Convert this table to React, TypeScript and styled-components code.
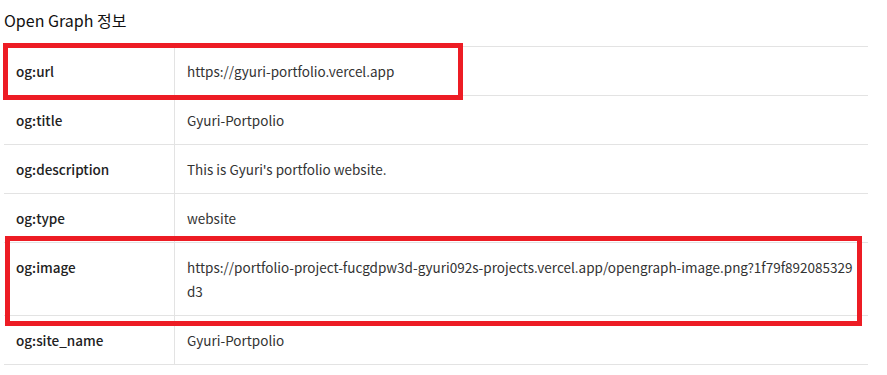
import styled, { createGlobalStyle } from "styled-components";

const GlobalStyle = createGlobalStyle`
  body {
    margin: 0;
    background: #fff;
    font-family: "Noto Sans CJK KR", "Noto Sans", sans-serif;
    color: #222;
  }
`;

const Page = styled.div`
  padding: 8px 19px 0 4px;
`;

const Heading = styled.h3`
  margin: 0 0 14px;
  font-size: 16px;
  font-weight: 400;
  line-height: 24px;
  color: #111;
`;

const TableWrap = styled.div`
  position: relative;
`;

const Table = styled.table`
  width: 100%;
  border-collapse: collapse;
  font-size: 13.5px;
  line-height: 24px;
`;

const Row = styled.tr`
  border-top: 1px solid #e3e3e3;
  border-bottom: 1px solid #e3e3e3;
`;

const Label = styled.th`
  width: 146px;
  padding: 12px;
  text-align: left;
  vertical-align: top;
  font-weight: 500;
  color: #222;
  border-right: 1px solid #e3e3e3;
`;

const Value = styled.td`
  padding: 12px;
  vertical-align: top;
  color: #333;
  word-break: break-all;
`;

const Highlight = styled.div<{ $top: number; $left: number; $width: number; $height: number }>`
  position: absolute;
  top: ${(p) => p.$top}px;
  left: ${(p) => p.$left}px;
  width: ${(p) => p.$width}px;
  height: ${(p) => p.$height}px;
  border: 5px solid #ed1c24;
  box-sizing: border-box;
  pointer-events: none;
`;

interface OgField {
  key: string;
  value: string;
}

const fields: OgField[] = [
  { key: "og:url", value: "https://gyuri-portfolio.vercel.app" },
  { key: "og:title", value: "Gyuri-Portpolio" },
  { key: "og:description", value: "This is Gyuri's portfolio website." },
  { key: "og:type", value: "website" },
  {
    key: "og:image",
    value:
      "https://portfolio-project-fucgdpw3d-gyuri092s-projects.vercel.app/opengraph-image.png?1f79f892085329d3",
  },
  { key: "og:site_name", value: "Gyuri-Portpolio" },
];

const App = () => {
  return (
    <Page>
      <GlobalStyle />
      <Heading>Open Graph 정보</Heading>
      <TableWrap>
        <Table>
          <tbody>
            {fields.map((field) => (
              <Row key={field.key}>
                <Label>{field.key}</Label>
                <Value>{field.value}</Value>
              </Row>
            ))}
          </tbody>
        </Table>
        <Highlight $top={-3} $left={-1} $width={460} $height={57} />
        <Highlight $top={190} $left={1} $width={857} $height={90} />
      </TableWrap>
    </Page>
  );
};

export default App;
